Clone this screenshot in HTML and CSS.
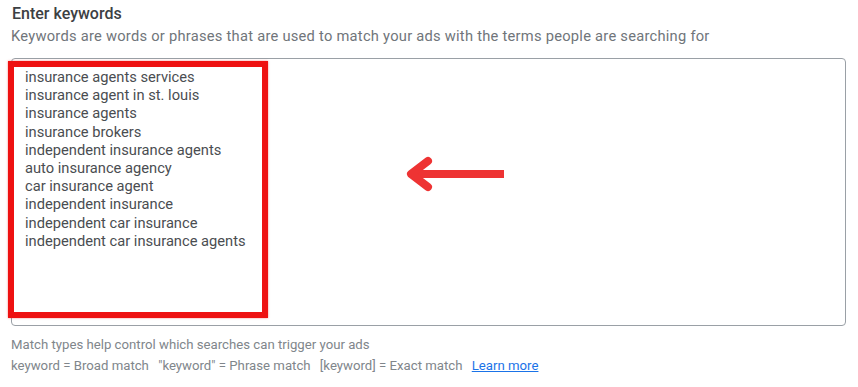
FILE: index.html
```html
<!DOCTYPE html>
<html lang="en">
<head>
<meta charset="utf-8">
<title>Enter keywords</title>
<link rel="stylesheet" href="styles.css">
</head>
<body>
<div class="panel">
  <div class="title">Enter keywords</div>
  <div class="subtitle">Keywords are words or phrases that are used to match your ads with the terms people are searching for</div>
  <div class="box">
    <div class="keywords">
      <div>insurance agents services</div>
      <div>insurance agent in st. louis</div>
      <div>insurance agents</div>
      <div>insurance brokers</div>
      <div>independent insurance agents</div>
      <div>auto insurance agency</div>
      <div>car insurance agent</div>
      <div>independent insurance</div>
      <div>independent car insurance</div>
      <div>independent car insurance agents</div>
    </div>
    <div class="highlight"></div>
    <svg class="arrow" width="104" height="36" viewBox="0 0 104 36">
      <path d="M5 18 H99" stroke="#ee3333" stroke-width="8" fill="none"/>
      <path d="M23 5 L6 18 L23 31" stroke="#ee3333" stroke-width="8" fill="none" stroke-linecap="round" stroke-linejoin="round"/>
    </svg>
  </div>
  <div class="help">
    <div>Match types help control which searches can trigger your ads</div>
    <div>keyword = Broad match <span class="gap"></span>"keyword" = Phrase match <span class="gap"></span>[keyword] = Exact match <span class="gap"></span><a class="learn" href="#">Learn more</a></div>
  </div>
</div>
</body>
</html>
```
FILE: styles.css
```css
html, body {
  margin: 0;
  padding: 0;
  background: #ffffff;
}
body {
  font-family: Roboto, "Noto Sans", "Liberation Sans", sans-serif;
  color: #3c4043;
}
.panel {
  padding: 4px 12px 0 11px;
}
.title {
  font-size: 16px;
  font-weight: 500;
  line-height: 19px;
  color: #3c4043;
  padding-left: 1px;
}
.subtitle {
  font-size: 14.7px;
  line-height: 20px;
  margin-top: 3px;
  color: #70757a;
  letter-spacing: 0.25px;
}
.box {
  position: relative;
  margin-top: 12px;
  height: 266px;
  border: 1px solid #9aa0a6;
  border-radius: 4px;
}
.keywords {
  padding: 9px 0 0 13px;
  font-size: 14.7px;
  line-height: 18.2px;
  color: #4a4d51;
}
.highlight {
  position: absolute;
  left: -4px;
  top: 2px;
  width: 248px;
  height: 245px;
  border: 6px solid #ee1111;
  box-shadow: 0 0 2px rgba(238, 17, 17, 0.5);
}
.arrow {
  position: absolute;
  left: 393px;
  top: 97px;
}
.help {
  margin-top: 8px;
  font-size: 13.2px;
  line-height: 21px;
  color: #80868b;
}
.gap {
  display: inline-block;
  width: 6px;
}
.learn {
  color: #1a73e8;
  text-decoration: underline;
}
```
